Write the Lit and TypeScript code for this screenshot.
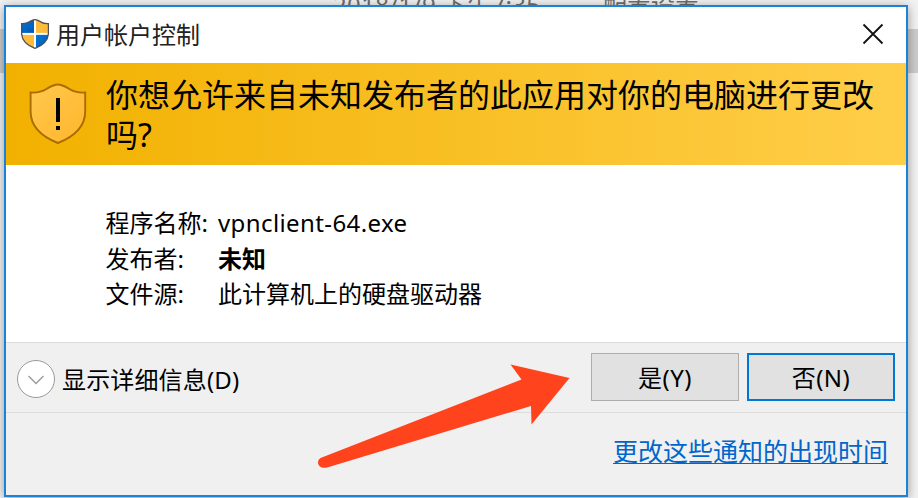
import { LitElement, html, css, svg } from "lit";
import { customElement, property } from "lit/decorators.js";

const shieldPath = "M28.5 1 C24 1 20.5 3.5 17 5.5 C12.5 8.3 8 9.5 1.2 9 V28 C1.2 43 12 53 28.5 59.5 C45 53 55.8 43 55.8 28 V9 C49 9.5 44.5 8.3 40 5.5 C36.5 3.5 33 1 28.5 1 Z";

@customElement("uac-button")
class UacButton extends LitElement {
  @property({ type: Boolean, reflect: true }) focused = false;
  static styles = css`
    :host { display: block; margin-top: -2px; }
    button {
      box-sizing: border-box; display: block; width: 148px; height: 48px; margin: 0; padding: 0;
      font: inherit; letter-spacing: 0.5px; line-height: 47px; color: #000; background: #e1e1e1; border: 1px solid #adadad; border-radius: 0;
    }
    :host([focused]) button { border: 2px solid #0078d7; line-height: 45px; }
  `;
  render() {
    return html`<button><slot></slot></button>`;
  }
}

@customElement("app-root")
class AppRoot extends LitElement {
  static styles = css`
    :host {
      display: block; position: relative; width: 918px; height: 498px; overflow: hidden;
      font-family: "Noto Sans", "Noto Sans CJK SC", sans-serif; font-size: 24px; color: #000;
      background: linear-gradient(#f2f2f2 0 29px, #cccccc 29px 73px, #f2f2f2 73px);
    }
    .behind {
      position: absolute; top: -7px; left: 333px; display: flex; color: #6d6d6d;
      font-size: 24px; line-height: 24px; white-space: nowrap;
    }
    .behind span:first-child { width: 270px; letter-spacing: 0.35px; }
    .dialog {
      position: absolute; left: 4px; top: 5px; box-sizing: border-box; width: 904px; height: 492px;
      border: 2px solid #1a83d8; background: #fff; box-shadow: 0 2px 10px rgba(0, 0, 0, 0.38);
      display: flex; flex-direction: column;
    }
    .titlebar { height: 56px; display: flex; align-items: center; padding: 0 22px 0 15px; box-sizing: border-box; }
    .titlebar .logo { width: 28px; height: 30px; margin-top: -3px; }
    .titlebar .name { margin-left: 7px; flex: 1; color: #222; line-height: 56px; }
    .titlebar .close { width: 22px; height: 22px; margin-top: -2px; }
    .banner {
      height: 102px; box-sizing: border-box; display: flex; padding: 12px 0 0 23px;
      background: linear-gradient(90deg, #f2b100, #ffce49);
    }
    .banner svg { width: 58px; height: 61px; margin-top: 8px; flex: none; }
    .banner h1 { margin: 0 0 0 19px; font-size: 32px; font-weight: 400; line-height: 40px; width: 780px; }
    .facts {
      margin: 0; height: 177px; box-sizing: border-box; padding: 40px 0 0 99.5px; display: grid;
      grid-template-columns: 112.5px auto; grid-template-rows: 36px 35px 35px; line-height: 35px; align-content: start;
    }
    .facts dt, .facts dd { margin: 0; white-space: nowrap; }
    .facts .latin { letter-spacing: 0.4px; }
    .facts .bold { font-weight: 700; }
    .actions {
      height: 71px; box-sizing: border-box; border-top: 1px solid #dcdcdc; border-bottom: 1px solid #dcdcdc;
      background: #f0f0f0; display: flex; align-items: center; padding: 0 11px; gap: 8px;
    }
    .actions .toggle { width: 38px; height: 38px; margin-top: 3px; }
    .actions .label { flex: 1; margin-top: 5px; line-height: 34px; margin-left: -1px; letter-spacing: 0.15px; }
    .footer { flex: 1; background: #f0f0f0; display: flex; justify-content: flex-end; padding: 20px 18px 0 0; }
    .footer a { font-size: 25px; line-height: 36px; color: #0066cc; text-decoration: underline; text-decoration-thickness: 1px; text-underline-offset: 2px; text-decoration-skip-ink: none; }
    .arrow { position: absolute; left: 0; top: 0; width: 918px; height: 498px; pointer-events: none; }
  `;

  private logo() {
    return svg`<svg class="logo" viewBox="0 0 57 60.5">
      <defs><clipPath id="s"><path d=${shieldPath}></path></clipPath>
      <linearGradient id="b" x1="0" y1="0" x2="1" y2="1"><stop offset="0" stop-color="#0078d7"></stop><stop offset="1" stop-color="#0057b8"></stop></linearGradient></defs>
      <g clip-path="url(#s)">
        <rect width="57" height="61" fill="#fff"></rect>
        <rect width="26.5" height="28" fill="url(#b)"></rect><rect x="30.5" width="27" height="28" fill="#ffbc3a"></rect>
        <rect y="32" width="26.5" height="30" fill="#ffbc3a"></rect><rect x="30.5" y="32" width="27" height="30" fill="url(#b)"></rect>
      </g>
      <path d=${shieldPath} fill="none" stroke="#505050" stroke-width="2.6"></path></svg>`;
  }

  render() {
    return html`
      <div class="behind"><span>2018/1/9 下午7:35</span><span>配置设置</span></div>
      <section class="dialog">
        <header class="titlebar">
          ${this.logo()}
          <span class="name">用户帐户控制</span>
          <svg class="close" viewBox="0 0 22 22"><path d="M1.5 1.5 20.5 20.5M20.5 1.5 1.5 20.5" stroke="#111" stroke-width="1.8"></path></svg>
        </header>
        <div class="banner">
          <svg viewBox="0 0 58 61">
            <defs><linearGradient id="g" x1="0" y1="0" x2="1" y2="1"><stop offset="0" stop-color="#ffc84b"></stop><stop offset="1" stop-color="#ffb62e"></stop></linearGradient></defs>
            <path transform="translate(0.4 0.5)" d=${shieldPath} fill="url(#g)" stroke="#a96c00" stroke-width="1.9"></path>
            <path d="M27 15h4v24h-4zM27 43h4v4h-4z"></path>
          </svg>
          <h1>你想允许来自未知发布者的此应用对你的电脑进行更改吗?</h1>
        </div>
        <dl class="facts">
          <dt>程序名称:</dt><dd class="latin">vpnclient-64.exe</dd>
          <dt>发布者:</dt><dd class="bold">未知</dd>
          <dt>文件源:</dt><dd>此计算机上的硬盘驱动器</dd>
        </dl>
        <div class="actions">
          <svg class="toggle" viewBox="0 0 38 38"><circle cx="19" cy="19" r="18.5" fill="#fff" stroke="#999"></circle><path d="M11.5 16 19 23.5 26.5 16" fill="none" stroke="#999" stroke-width="1.3"></path></svg>
          <span class="label">显示详细信息(D)</span>
          <uac-button>是(Y)</uac-button>
          <uac-button focused>否(N)</uac-button>
        </div>
        <footer class="footer"><a>更改这些通知的出现时间</a></footer>
      </section>
      <svg class="arrow" viewBox="0 0 918 498"><path fill="#ff431c" d="M320.5 458 L521.5 379.5 L510.5 364.5 L569.5 378 L531.5 424.5 L531 406 L328 467.2 C322 468.5 319 467.5 318 463 Q317.7 459.5 320.5 458Z"></path></svg>
    `;
  }
}
